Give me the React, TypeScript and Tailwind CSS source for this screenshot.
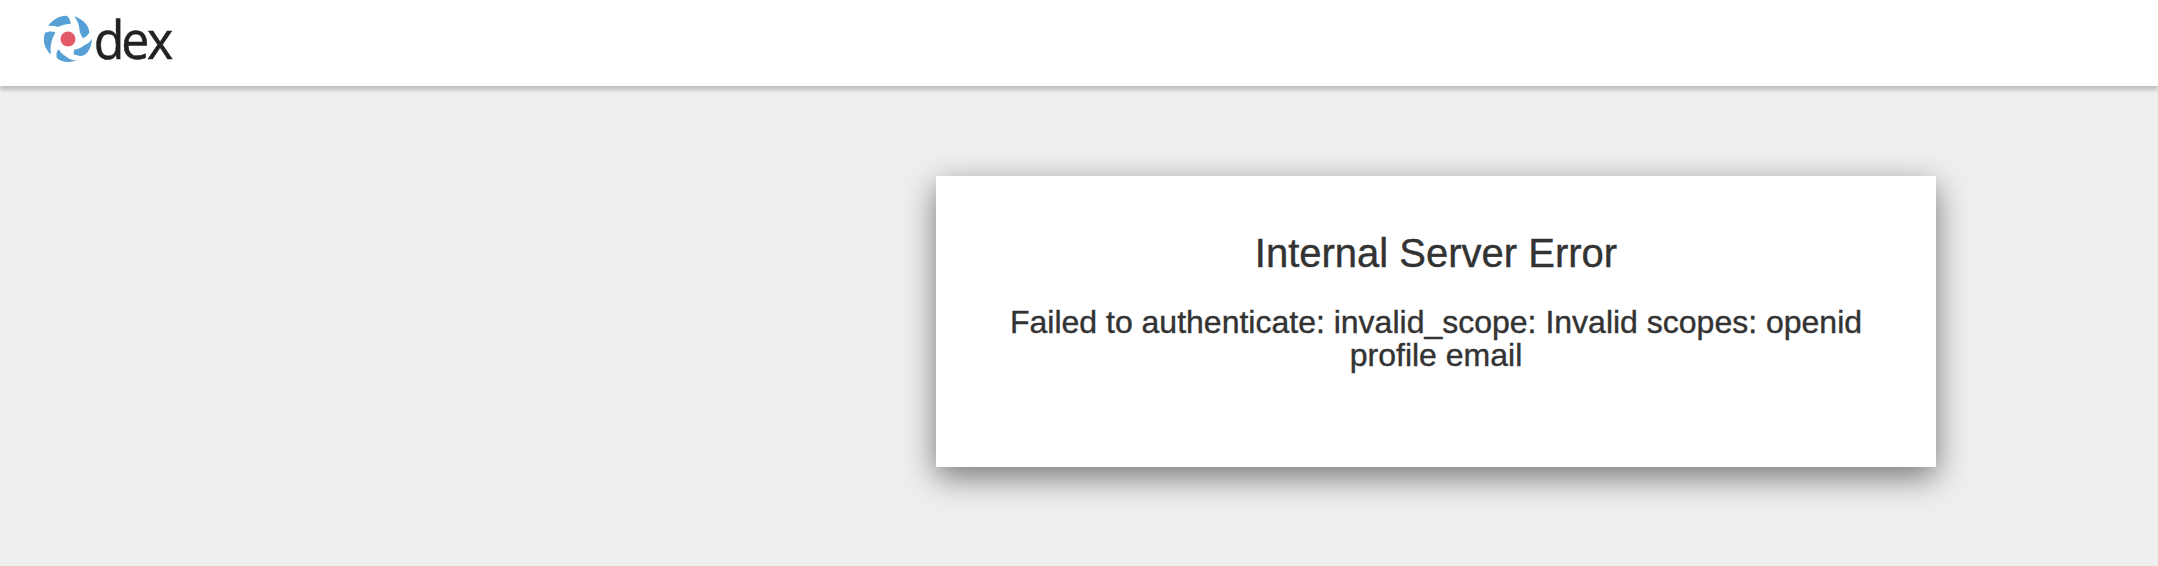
function DexLogo() {
  return (
    <svg className="h-[86px] w-[150px] overflow-visible" viewBox="0 0 450 258" role="img" aria-label="dex">
      <g fill="#57a0d6">
        <path d="M24 78C38 58 58 47 78 47C86 49 90 58 93 71C74 72 62 77 54 81C44 77 34 76 24 78Z" />
        <path d="M103 49C128 57 148 76 148 98C141 108 136 113 128 114C122 104 118 93 118 86C117 73 112 62 103 49Z" />
        <path d="M156 116C154 142 145 163 124 168C114 168 107 165 101 163C101 159 101 152 103 149C116 147 126 143 132 136C143 132 151 125 156 116Z" />
        <path d="M110 181C88 190 64 187 50 173C48 162 50 153 56 148C63 160 71 166 80 171C88 178 98 181 110 181Z" />
        <path d="M33 163C15 149 6 122 15 99C24 94 36 93 46 97C44 105 35 117 34 129C31 139 31 151 33 163Z" />
      </g>
      <circle cx="84" cy="117" r="22.5" fill="#e15a66" />
      <text
        x="0 88 170"
        y="0"
        transform="translate(161 176) scale(0.94 1)"
        fontSize="160"
        fill="#222"
        stroke="#222"
        strokeWidth="1.5"
        fontFamily="'Open Sans', sans-serif"
      >
        dex
      </text>
    </svg>
  );
}

export default function App() {
  return (
    <div className="h-[566px] overflow-hidden bg-[#efefef] font-['Liberation_Sans',Arial,sans-serif] text-[#333333]">
      <header className="relative h-[86px] bg-white pl-10 shadow-[0_4px_4px_rgba(0,0,0,0.2)]">
        <DexLogo />
      </header>
      <main className="ml-[936px] mt-[90px] h-[291px] w-[1000px] bg-white px-[60px] pt-[54px] text-center shadow-[0_10px_30px_rgba(0,0,0,0.5)] [-webkit-text-stroke:0.4px_#333333]">
        <h1 className="text-[40px] leading-[46px]">Internal Server Error</h1>
        <p className="mt-[30px] text-[32px] leading-[33px]">
          Failed to authenticate: invalid_scope: Invalid scopes: openid profile email
        </p>
      </main>
    </div>
  );
}
